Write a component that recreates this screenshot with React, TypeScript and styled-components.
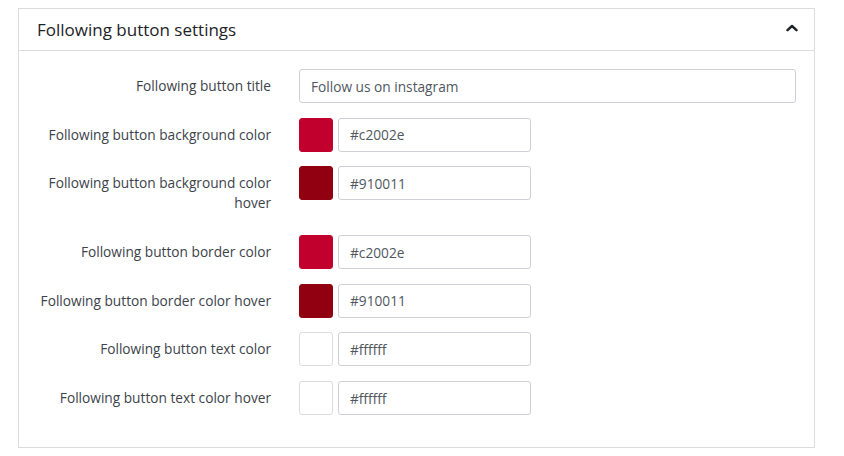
import styled, { createGlobalStyle } from 'styled-components'

const GlobalStyle = createGlobalStyle`
  html, body {
    margin: 0;
    padding: 0;
    background: #fff;
  }
  body {
    font-family: "Open Sans", "Noto Sans", sans-serif;
    color: #3c434a;
  }
  * { box-sizing: border-box; }
`

const Page = styled.div`
  padding: 8px 29px 0 18px;
`

const Panel = styled.section`
  border: 1px solid #dcdcde;
  background: #fff;
`

const Header = styled.header`
  height: 42px;
  display: flex;
  align-items: center;
  justify-content: space-between;
  padding: 0 16px 0 18px;
  border-bottom: 1px solid #dcdcde;
`

const Title = styled.h2`
  margin: 0;
  font-size: 17px;
  font-weight: 500;
  color: #1d2327;
`

const Toggle = styled.button`
  border: 0;
  background: none;
  padding: 0 0 3px;
  display: flex;
  color: #1d2327;
  cursor: pointer;
`

const Body = styled.div`
  padding: 18px 18px 32px 0;
  display: flex;
  flex-direction: column;
  gap: 14.7px;
`

const Row = styled.div`
  display: grid;
  grid-template-columns: 252px 1fr;
  column-gap: 28px;
  align-items: start;
`

const Label = styled.label`
  padding: 7px 0;
  text-align: right;
  font-size: 13.7px;
  line-height: 20px;
  color: #3c434a;
`

const Controls = styled.div`
  display: flex;
  gap: 5px;
`

const TextInput = styled.input<{ $wide?: boolean }>`
  height: 34px;
  width: ${p => (p.$wide ? '100%' : '193px')};
  border: 1px solid #cdd0d6;
  border-radius: 3px;
  padding: 0 11px;
  font-family: inherit;
  font-size: 13.7px;
  color: #50575e;
  background: #fff;
  outline: none;
`

const Swatch = styled.span<{ $color: string }>`
  width: 34px;
  height: 34px;
  border-radius: 3px;
  border: 1px solid ${p => (p.$color === '#ffffff' ? '#dcdcde' : p.$color)};
  background: ${p => p.$color};
  flex: none;
`

const colorRows = [
  { label: 'Following button background color', value: '#c2002e' },
  { label: 'Following button background color hover', value: '#910011' },
  { label: 'Following button border color', value: '#c2002e' },
  { label: 'Following button border color hover', value: '#910011' },
  { label: 'Following button text color', value: '#ffffff' },
  { label: 'Following button text color hover', value: '#ffffff' },
]

function Chevron() {
  return (
    <svg width="12" height="8" viewBox="0 0 12 8" fill="none">
      <path d="M1.5 6.2 6 2l4.5 4.2" stroke="currentColor" strokeWidth="2.4" strokeLinecap="round" strokeLinejoin="round" />
    </svg>
  )
}

export default function App() {
  return (
    <>
      <GlobalStyle />
      <Page>
        <Panel>
          <Header>
            <Title>Following button settings</Title>
            <Toggle aria-label="Collapse"><Chevron /></Toggle>
          </Header>
          <Body>
            <Row>
              <Label>Following button title</Label>
              <TextInput $wide defaultValue="Follow us on instagram" />
            </Row>
            {colorRows.map(r => (
              <Row key={r.label}>
                <Label>{r.label}</Label>
                <Controls>
                  <Swatch $color={r.value} />
                  <TextInput defaultValue={r.value} />
                </Controls>
              </Row>
            ))}
          </Body>
        </Panel>
      </Page>
    </>
  )
}
